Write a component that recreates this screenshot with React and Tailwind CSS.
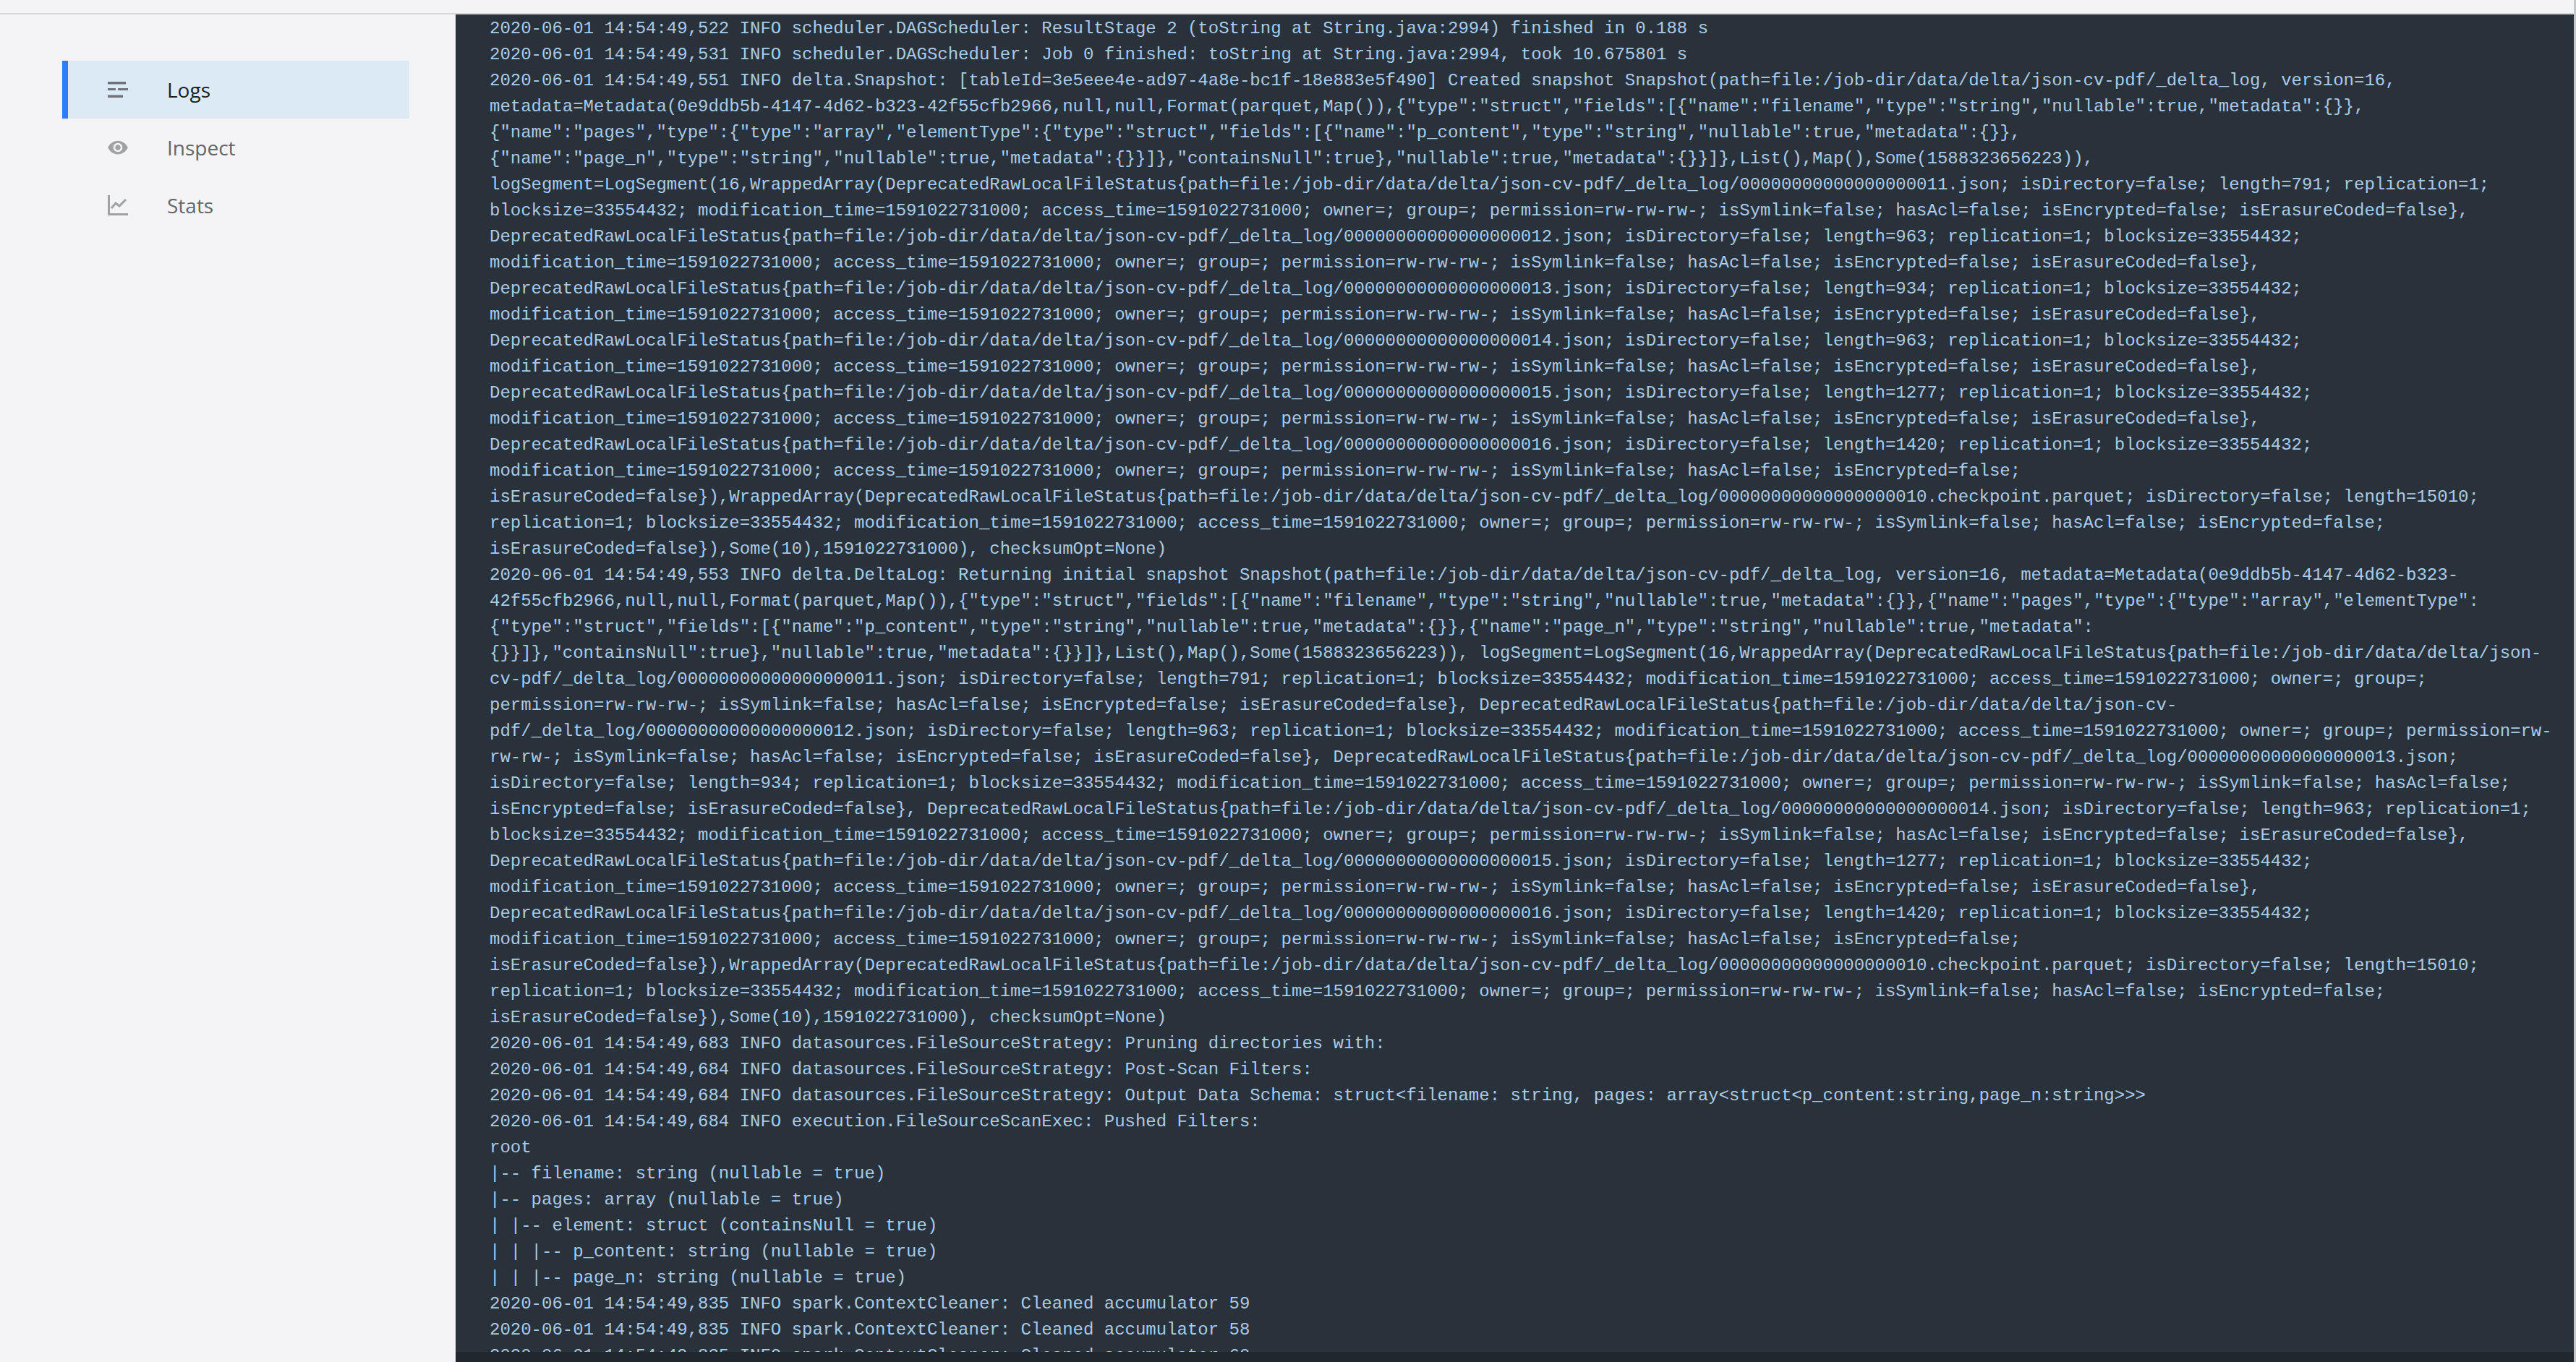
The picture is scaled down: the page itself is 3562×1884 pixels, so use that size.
const NAV_ITEMS = ['Logs', 'Inspect', 'Stats']

const TS = '2020-06-01 14:54:49'
const META_TIMES = 'modification_time=1591022731000; access_time=1591022731000; owner=; group=; permission=rw-rw-rw-; isSymlink=false; hasAcl=false;'
const LOG_DIR = 'path=file:/job-dir/data/delta/json-cv-pdf/_delta_log'

const LOG_LINES = [
  `${TS},522 INFO scheduler.DAGScheduler: ResultStage 2 (toString at String.java:2994) finished in 0.188 s`,
  `${TS},531 INFO scheduler.DAGScheduler: Job 0 finished: toString at String.java:2994, took 10.675801 s`,
  `${TS},551 INFO delta.Snapshot: [tableId=3e5eee4e-ad97-4a8e-bc1f-18e883e5f490] Created snapshot Snapshot(${LOG_DIR}, version=16,`,
  'metadata=Metadata(0e9ddb5b-4147-4d62-b323-42f55cfb2966,null,null,Format(parquet,Map()),{"type":"struct","fields":[{"name":"filename","type":"string","nullable":true,"metadata":{}},',
  '{"name":"pages","type":{"type":"array","elementType":{"type":"struct","fields":[{"name":"p_content","type":"string","nullable":true,"metadata":{}},',
  '{"name":"page_n","type":"string","nullable":true,"metadata":{}}]},"containsNull":true},"nullable":true,"metadata":{}}]},List(),Map(),Some(1588323656223)),',
  `logSegment=LogSegment(16,WrappedArray(DeprecatedRawLocalFileStatus{${LOG_DIR}/00000000000000000011.json; isDirectory=false; length=791; replication=1;`,
  `blocksize=33554432; ${META_TIMES} isEncrypted=false; isErasureCoded=false},`,
  `DeprecatedRawLocalFileStatus{${LOG_DIR}/00000000000000000012.json; isDirectory=false; length=963; replication=1; blocksize=33554432;`,
  `${META_TIMES} isEncrypted=false; isErasureCoded=false},`,
  `DeprecatedRawLocalFileStatus{${LOG_DIR}/00000000000000000013.json; isDirectory=false; length=934; replication=1; blocksize=33554432;`,
  `${META_TIMES} isEncrypted=false; isErasureCoded=false},`,
  `DeprecatedRawLocalFileStatus{${LOG_DIR}/00000000000000000014.json; isDirectory=false; length=963; replication=1; blocksize=33554432;`,
  `${META_TIMES} isEncrypted=false; isErasureCoded=false},`,
  `DeprecatedRawLocalFileStatus{${LOG_DIR}/00000000000000000015.json; isDirectory=false; length=1277; replication=1; blocksize=33554432;`,
  `${META_TIMES} isEncrypted=false; isErasureCoded=false},`,
  `DeprecatedRawLocalFileStatus{${LOG_DIR}/00000000000000000016.json; isDirectory=false; length=1420; replication=1; blocksize=33554432;`,
  `${META_TIMES} isEncrypted=false;`,
  `isErasureCoded=false}),WrappedArray(DeprecatedRawLocalFileStatus{${LOG_DIR}/00000000000000000010.checkpoint.parquet; isDirectory=false; length=15010;`,
  `replication=1; blocksize=33554432; ${META_TIMES} isEncrypted=false;`,
  'isErasureCoded=false}),Some(10),1591022731000), checksumOpt=None)',
  `${TS},553 INFO delta.DeltaLog: Returning initial snapshot Snapshot(${LOG_DIR}, version=16, metadata=Metadata(0e9ddb5b-4147-4d62-b323-`,
  '42f55cfb2966,null,null,Format(parquet,Map()),{"type":"struct","fields":[{"name":"filename","type":"string","nullable":true,"metadata":{}},{"name":"pages","type":{"type":"array","elementType":',
  '{"type":"struct","fields":[{"name":"p_content","type":"string","nullable":true,"metadata":{}},{"name":"page_n","type":"string","nullable":true,"metadata":',
  '{}}]},"containsNull":true},"nullable":true,"metadata":{}}]},List(),Map(),Some(1588323656223)), logSegment=LogSegment(16,WrappedArray(DeprecatedRawLocalFileStatus{path=file:/job-dir/data/delta/json-',
  'cv-pdf/_delta_log/00000000000000000011.json; isDirectory=false; length=791; replication=1; blocksize=33554432; modification_time=1591022731000; access_time=1591022731000; owner=; group=;',
  'permission=rw-rw-rw-; isSymlink=false; hasAcl=false; isEncrypted=false; isErasureCoded=false}, DeprecatedRawLocalFileStatus{path=file:/job-dir/data/delta/json-cv-',
  'pdf/_delta_log/00000000000000000012.json; isDirectory=false; length=963; replication=1; blocksize=33554432; modification_time=1591022731000; access_time=1591022731000; owner=; group=; permission=rw-',
  `rw-rw-; isSymlink=false; hasAcl=false; isEncrypted=false; isErasureCoded=false}, DeprecatedRawLocalFileStatus{${LOG_DIR}/00000000000000000013.json;`,
  'isDirectory=false; length=934; replication=1; blocksize=33554432; modification_time=1591022731000; access_time=1591022731000; owner=; group=; permission=rw-rw-rw-; isSymlink=false; hasAcl=false;',
  `isEncrypted=false; isErasureCoded=false}, DeprecatedRawLocalFileStatus{${LOG_DIR}/00000000000000000014.json; isDirectory=false; length=963; replication=1;`,
  `blocksize=33554432; ${META_TIMES} isEncrypted=false; isErasureCoded=false},`,
  `DeprecatedRawLocalFileStatus{${LOG_DIR}/00000000000000000015.json; isDirectory=false; length=1277; replication=1; blocksize=33554432;`,
  `${META_TIMES} isEncrypted=false; isErasureCoded=false},`,
  `DeprecatedRawLocalFileStatus{${LOG_DIR}/00000000000000000016.json; isDirectory=false; length=1420; replication=1; blocksize=33554432;`,
  `${META_TIMES} isEncrypted=false;`,
  `isErasureCoded=false}),WrappedArray(DeprecatedRawLocalFileStatus{${LOG_DIR}/00000000000000000010.checkpoint.parquet; isDirectory=false; length=15010;`,
  `replication=1; blocksize=33554432; ${META_TIMES} isEncrypted=false;`,
  'isErasureCoded=false}),Some(10),1591022731000), checksumOpt=None)',
  `${TS},683 INFO datasources.FileSourceStrategy: Pruning directories with:`,
  `${TS},684 INFO datasources.FileSourceStrategy: Post-Scan Filters:`,
  `${TS},684 INFO datasources.FileSourceStrategy: Output Data Schema: struct<filename: string, pages: array<struct<p_content:string,page_n:string>>>`,
  `${TS},684 INFO execution.FileSourceScanExec: Pushed Filters:`,
  'root',
  '|-- filename: string (nullable = true)',
  '|-- pages: array (nullable = true)',
  '| |-- element: struct (containsNull = true)',
  '| | |-- p_content: string (nullable = true)',
  '| | |-- page_n: string (nullable = true)',
  `${TS},835 INFO spark.ContextCleaner: Cleaned accumulator 59`,
  `${TS},835 INFO spark.ContextCleaner: Cleaned accumulator 58`,
  `${TS},835 INFO spark.ContextCleaner: Cleaned accumulator 60`,
]

function NavIcon({ name }) {
  if (name === 'Logs') {
    return (
      <svg width="28" height="24" viewBox="0 0 28 24" className="text-[#6f7378]">
        <rect x="0" y="1" width="25" height="3.5" fill="currentColor" />
        <rect x="0" y="10" width="11" height="3" fill="currentColor" />
        <rect x="14" y="10" width="14" height="3" fill="currentColor" />
        <rect x="0" y="19.5" width="21" height="3.5" fill="currentColor" />
      </svg>
    )
  }
  if (name === 'Inspect') {
    return (
      <svg width="28" height="20" viewBox="1 4 22 16" className="text-[#a0a2a5]">
        <path
          fill="currentColor"
          d="M12 4.5C7 4.5 2.73 7.61 1 12c1.73 4.39 6 7.5 11 7.5s9.27-3.11 11-7.5c-1.73-4.39-6-7.5-11-7.5zM12 17c-2.76 0-5-2.24-5-5s2.24-5 5-5 5 2.24 5 5-2.24 5-5 5zm0-8c-1.66 0-3 1.34-3 3s1.34 3 3 3 3-1.34 3-3-1.34-3-3-3z"
        />
      </svg>
    )
  }
  return (
    <svg width="28" height="28" viewBox="0 0 28 28" fill="none" stroke="currentColor" strokeWidth="3" className="text-[#a0a2a5]">
      <path d="M1.5 0V26.5H28" />
      <path d="M5 18L11 11L16 15L25 6" />
    </svg>
  )
}

export default function App() {
  return (
    <div className="flex h-[1884px] flex-col overflow-hidden border-r-[3px] border-[#c4c7cb] bg-[#f4f4f6]">
      <div className="h-5 shrink-0 border-b-2 border-[#d6d6d9]" />
      <div className="flex min-h-0 flex-1">
        <aside className="w-[630px] shrink-0 pt-16 pl-[86px] pr-16" style={{ fontFamily: '"Open Sans", sans-serif' }}>
          {NAV_ITEMS.map(item => (
            <div
              key={item}
              className={`flex h-20 items-center border-l-8 pl-[55px] text-[28px] ${
                item === 'Logs' ? 'border-[#2e7cf6] bg-[#dceaf5] text-[#1d2024]' : 'border-transparent text-[#63666a]'
              }`}
            >
              <span className="flex w-[82px] shrink-0 items-center">
                <NavIcon name={item} />
              </span>
              {item}
            </div>
          ))}
        </aside>
        <main className="flex min-w-0 flex-1 flex-col">
          <div className="min-h-0 flex-1 overflow-hidden bg-[#29323a] pt-0.5 pl-[47px] text-[24px] leading-9 text-[#a9cbe8]" style={{ fontFamily: '"Liberation Mono", monospace' }}>
            {LOG_LINES.map((line, i) => (
              <div key={i} className="whitespace-nowrap">{line}</div>
            ))}
          </div>
          <div className="h-3.5 shrink-0 bg-[#20282d]" />
        </main>
      </div>
    </div>
  )
}
